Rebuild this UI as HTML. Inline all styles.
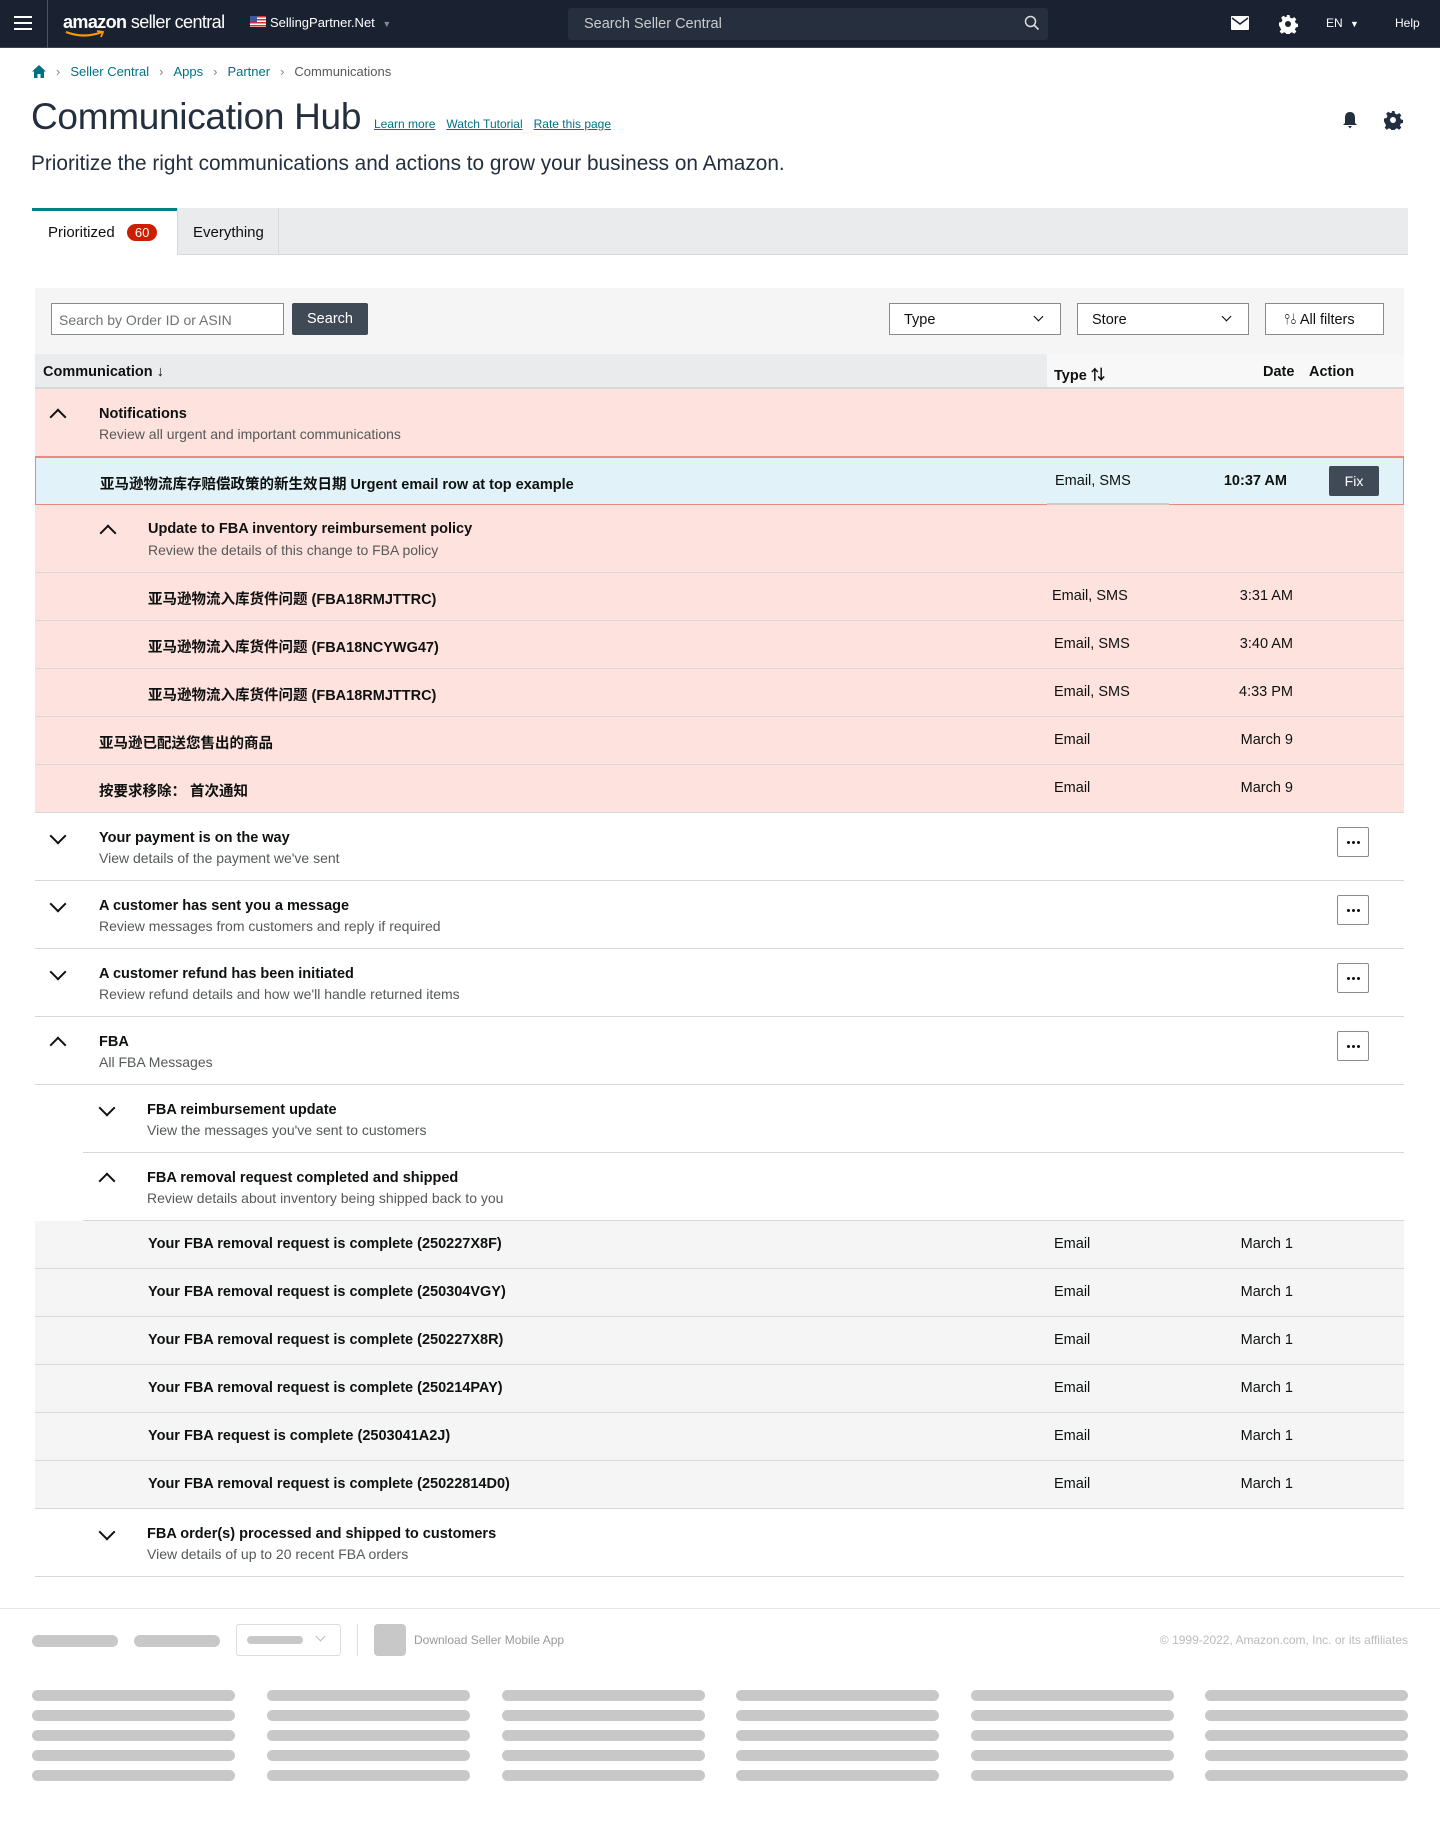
<!DOCTYPE html>
<html><head><meta charset="utf-8"><style>
*{box-sizing:border-box;margin:0;padding:0}
body{width:1440px;height:1830px;background:#fff;font-family:"Liberation Sans","Noto Sans CJK SC",sans-serif;color:#0f1111;font-size:15px;position:relative;overflow:hidden}
.nav{height:48px;background:#1a2130;position:relative;color:#fff;border-bottom:1px solid #3a4553}
.abs{position:absolute}
a{color:#007185;text-decoration:underline}
.bc{top:64px;left:32px;font-size:13px;color:#007185;display:flex;gap:10px;align-items:center}
.bc .g{color:#888}
.row{position:absolute;left:35px;width:1369px;border-bottom:1px solid #d5d9d9}
.pink{background:#fde2dd}
.t{position:absolute;font-weight:700;font-size:14.5px;color:#0f1111}
.s{position:absolute;font-size:14px;color:#565959}
.ty{position:absolute;left:1019px;font-size:14.5px}
.dt{position:absolute;right:111px;font-size:14.5px;text-align:right}
.chev{position:absolute;width:12px;height:12px;border-left:2.5px solid #0f1111;border-top:2.5px solid #0f1111}
.up{transform:rotate(45deg)}
.down{transform:rotate(225deg)}
.dots{position:absolute;left:1302px;width:32px;height:30px;border:1px solid #888c8c;border-radius:2px;background:#fff}
.dots i{position:absolute;top:13px;width:3px;height:3px;border-radius:2px;background:#0f1111}
.sk{position:absolute;height:11px;border-radius:6px;background:#c8c8c8}
</style></head><body>
<div class="nav">
<div class="abs" style="left:14px;top:16px;width:18px;height:14px;border-top:2px solid #fff;border-bottom:2px solid #fff"><div style="margin-top:4px;border-top:2px solid #fff"></div></div>
<div class="abs" style="left:47px;top:0;width:1px;height:48px;background:#555"></div>
<div class="abs" style="left:63px;top:12px;font-size:18px;letter-spacing:-0.6px"><b>amazon</b> seller central</div>
<svg class="abs" style="left:64px;top:30px" width="42" height="8"><path d="M2 2 Q20 9 38 2" stroke="#f90" stroke-width="2.2" fill="none"/><path d="M33 1 L39 2 L37 7" stroke="#f90" stroke-width="1.8" fill="none"/></svg>
<div class="abs" style="left:250px;top:16px;width:16px;height:11px;background:repeating-linear-gradient(#c33 0 1.5px,#fff 1.5px 3px)"><div style="width:7px;height:6px;background:#3c5a9a"></div></div>
<div class="abs" style="left:270px;top:15px;font-size:13px">SellingPartner.Net <span style="color:#888;font-size:9px;margin-left:4px">▼</span></div>
<div class="abs" style="left:568px;top:8px;width:480px;height:32px;background:#252f3e;border-radius:3px;font-size:14.5px;color:#ccc;padding:8px 16px">Search Seller Central</div>
<svg class="abs" style="left:1024px;top:15px" width="16" height="16"><circle cx="6.5" cy="6.5" r="5" stroke="#ddd" stroke-width="1.5" fill="none"/><path d="M10 10 L14.5 14.5" stroke="#ddd" stroke-width="1.6"/></svg>
<svg class="abs" style="left:1231px;top:16px" width="18" height="14"><rect width="18" height="14" rx="1" fill="#fff"/><path d="M1 2 L9 8 L17 2" stroke="#1a2130" stroke-width="1.6" fill="none"/></svg>
<svg class="abs" style="left:1278px;top:14px" width="20" height="20" viewBox="0 0 20 20"><path fill="#fff" d="M8.5 1h3l.5 2.5 2 1 2.2-1.4 2.1 2.1-1.4 2.2 1 2 2.5.5v3l-2.5.5-1 2 1.4 2.2-2.1 2.1-2.2-1.4-2 1-.5 2.5h-3l-.5-2.5-2-1-2.2 1.4-2.1-2.1 1.4-2.2-1-2L1 11.5v-3l2.5-.5 1-2-1.4-2.2 2.1-2.1 2.2 1.4 2-1z"/><circle cx="10" cy="10" r="3" fill="#1a2130"/></svg>
<div class="abs" style="left:1326px;top:16px;font-size:12px">EN <span style="font-size:9px;margin-left:4px">▼</span></div>
<div class="abs" style="left:1395px;top:16px;font-size:12px">Help</div>
</div>
<div class="abs bc"><svg width="14" height="13"><path d="M7 0 L14 6.5 H12 V13 H8.5 V9 H5.5 V13 H2 V6.5 H0Z" fill="#007185"/></svg><span class="g">›</span><span>Seller Central</span><span class="g">›</span><span>Apps</span><span class="g">›</span><span>Partner</span><span class="g">›</span><span style="color:#565959">Communications</span></div>
<div class="abs" style="left:31px;top:96px;font-size:37px;color:#232f3e;letter-spacing:-0.3px">Communication Hub</div>
<div class="abs" style="left:374px;top:117px;font-size:12px;display:flex;gap:11px"><a>Learn more</a><a>Watch Tutorial</a><a>Rate this page</a></div>
<svg class="abs" style="left:1342px;top:111px" width="16" height="18"><path d="M8 1 C4 1 3 4 3 7 V12 L1 14 H15 L13 12 V7 C13 4 12 1 8 1Z M6 15 H10 L8 17.5Z" fill="#232f3e"/></svg>
<svg class="abs" style="left:1383px;top:110px" width="20" height="20" viewBox="0 0 20 20"><path fill="#232f3e" d="M8.5 1h3l.5 2.5 2 1 2.2-1.4 2.1 2.1-1.4 2.2 1 2 2.5.5v3l-2.5.5-1 2 1.4 2.2-2.1 2.1-2.2-1.4-2 1-.5 2.5h-3l-.5-2.5-2-1-2.2 1.4-2.1-2.1 1.4-2.2-1-2L1 11.5v-3l2.5-.5 1-2-1.4-2.2 2.1-2.1 2.2 1.4 2-1z"/><circle cx="10" cy="10" r="3" fill="#fff"/></svg>
<div class="abs" style="left:31px;top:152px;font-size:20.8px;color:#232f3e">Prioritize the right communications and actions to grow your business on Amazon.</div>
<div class="abs" style="left:32px;top:208px;width:1376px;height:47px;background:#eaebec;border-bottom:1px solid #d5d9d9"></div>
<div class="abs" style="left:32px;top:208px;width:145px;height:47px;background:#fff;border-top:3px solid #067d8a;font-size:15px;padding:13px 16px">Prioritized <span style="display:inline-block;background:#cc1f00;color:#fff;border-radius:9px;padding:1px 8px;font-size:13px;margin-left:8px">60</span></div>
<div class="abs" style="left:177px;top:208px;width:102px;height:47px;border-left:1px solid #d5d9d9;border-right:1px solid #d5d9d9;padding:16px 15px;font-size:15px">Everything</div>
<div class="abs" style="left:35px;top:288px;width:1369px;height:66px;background:#f5f5f5"></div>
<div class="abs" style="left:51px;top:303px;width:233px;height:32px;border:1px solid #888c8c;background:#fff;font-size:14px;color:#6f7373;padding:8px 7px">Search by Order ID or ASIN</div>
<div class="abs" style="left:292px;top:303px;width:76px;height:32px;background:#3f4a56;color:#fff;font-size:14.5px;text-align:center;line-height:33px;border-radius:2px">Search</div>
<div class="abs" style="left:889px;top:303px;width:172px;height:32px;border:1px solid #888c8c;background:#fff;padding:8px 14px;font-size:14.5px">Type<span style="position:absolute;right:18px;top:9px;width:7px;height:7px;border-right:1.5px solid #000;border-bottom:1.5px solid #000;transform:rotate(45deg)"></span></div>
<div class="abs" style="left:1077px;top:303px;width:172px;height:32px;border:1px solid #888c8c;background:#fff;padding:8px 14px;font-size:14.5px">Store<span style="position:absolute;right:18px;top:9px;width:7px;height:7px;border-right:1.5px solid #000;border-bottom:1.5px solid #000;transform:rotate(45deg)"></span></div>
<div class="abs" style="left:1265px;top:303px;width:119px;height:32px;border:1px solid #888c8c;background:#fff;padding:8px 18px;font-size:14.5px">⫯⫰ All filters</div>
<div class="abs" style="left:35px;top:354px;width:1369px;height:35px;background:#f8f8f8;border-bottom:2px solid #d5d9d9"></div>
<div class="abs" style="left:35px;top:354px;width:1012px;height:33px;background:#eaebec"></div>
<div class="abs" style="left:43px;top:364px;font-weight:700;font-size:14.5px">Communication ↓</div>
<div class="abs" style="left:1054px;top:364px;font-weight:700;font-size:14.5px">Type ⇅</div>
<div class="abs" style="left:1263px;top:364px;font-weight:700;font-size:14.5px">Date</div>
<div class="abs" style="left:1309px;top:364px;font-weight:700;font-size:14.5px">Action</div>

<div class="row pink" style="top:389px;height:68px;border-bottom:1px solid #e88"><i class="chev up" style="left:17px;top:22px"></i><div class="t" style="left:64px;top:17px">Notifications</div><div class="s" style="left:64px;top:37px">Review all urgent and important communications</div></div>
<div class="row" style="top:457px;height:48px;background:#e1f3f8;border:1px solid #e9897a"><div class="t" style="left:64px;top:15px">亚马逊物流库存赔偿政策的新生效日期 Urgent email row at top example</div><div class="ty" style="top:15px">Email, SMS</div><div class="dt" style="top:15px;font-weight:700;right:116px">10:37 AM</div><div class="abs" style="left:1293px;top:8px;width:50px;height:30px;background:#3f4a56;color:#fff;text-align:center;line-height:30px;font-size:14px;border-radius:2px">Fix</div><div class="abs" style="left:1011px;bottom:-1px;width:122px;height:2px;background:#ccc"></div></div>
<div class="row pink" style="top:505px;height:68px"><i class="chev up" style="left:67px;top:22px"></i><div class="t" style="left:113px;top:16px">Update to FBA inventory reimbursement policy</div><div class="s" style="left:113px;top:37px">Review the details of this change to FBA policy</div></div>
<div class="row pink" style="top:573px;height:48px"><div class="t" style="left:113px;top:15px">亚马逊物流入库货件问题 (FBA18RMJTTRC)</div><div class="ty" style="top:15px;left:1017px">Email, SMS</div><div class="dt" style="top:15px">3:31 AM</div></div>
<div class="row pink" style="top:621px;height:48px"><div class="t" style="left:113px;top:15px">亚马逊物流入库货件问题 (FBA18NCYWG47)</div><div class="ty" style="top:15px">Email, SMS</div><div class="dt" style="top:15px">3:40 AM</div></div>
<div class="row pink" style="top:669px;height:48px"><div class="t" style="left:113px;top:15px">亚马逊物流入库货件问题 (FBA18RMJTTRC)</div><div class="ty" style="top:15px">Email, SMS</div><div class="dt" style="top:15px">4:33 PM</div></div>
<div class="row pink" style="top:717px;height:48px"><div class="t" style="left:64px;top:15px">亚马逊已配送您售出的商品</div><div class="ty" style="top:15px">Email</div><div class="dt" style="top:15px">March 9</div></div>
<div class="row pink" style="top:765px;height:48px"><div class="t" style="left:64px;top:15px">按要求移除： 首次通知</div><div class="ty" style="top:15px">Email</div><div class="dt" style="top:15px">March 9</div></div>

<div class="row" style="top:813px;height:68px"><i class="chev down" style="left:17px;top:17px"></i><div class="t" style="left:64px;top:17px">Your payment is on the way</div><div class="s" style="left:64px;top:37px">View details of the payment we've sent</div><div class="dots" style="top:14px"><i style="left:9px"></i><i style="left:14px"></i><i style="left:19px"></i></div></div>
<div class="row" style="top:881px;height:68px"><i class="chev down" style="left:17px;top:17px"></i><div class="t" style="left:64px;top:17px">A customer has sent you a message</div><div class="s" style="left:64px;top:37px">Review messages from customers and reply if required</div><div class="dots" style="top:14px"><i style="left:9px"></i><i style="left:14px"></i><i style="left:19px"></i></div></div>
<div class="row" style="top:949px;height:68px"><i class="chev down" style="left:17px;top:17px"></i><div class="t" style="left:64px;top:17px">A customer refund has been initiated</div><div class="s" style="left:64px;top:37px">Review refund details and how we'll handle returned items</div><div class="dots" style="top:14px"><i style="left:9px"></i><i style="left:14px"></i><i style="left:19px"></i></div></div>
<div class="row" style="top:1017px;height:68px"><i class="chev up" style="left:17px;top:22px"></i><div class="t" style="left:64px;top:17px">FBA</div><div class="s" style="left:64px;top:37px">All FBA Messages</div><div class="dots" style="top:14px"><i style="left:9px"></i><i style="left:14px"></i><i style="left:19px"></i></div></div>
<div class="row" style="top:1085px;height:68px;left:83px;width:1321px"><i class="chev down" style="left:18px;top:17px"></i><div class="t" style="left:64px;top:17px">FBA reimbursement update</div><div class="s" style="left:64px;top:37px">View the messages you've sent to customers</div></div>
<div class="row" style="top:1153px;height:68px;left:83px;width:1321px"><i class="chev up" style="left:18px;top:22px"></i><div class="t" style="left:64px;top:17px">FBA removal request completed and shipped</div><div class="s" style="left:64px;top:37px">Review details about inventory being shipped back to you</div></div>
<div class="row" style="top:1221px;height:48px;background:#f5f5f5"><div class="t" style="left:113px;top:15px">Your FBA removal request is complete (250227X8F)</div><div class="ty" style="top:15px">Email</div><div class="dt" style="top:15px">March 1</div></div>
<div class="row" style="top:1269px;height:48px;background:#f5f5f5"><div class="t" style="left:113px;top:15px">Your FBA removal request is complete (250304VGY)</div><div class="ty" style="top:15px">Email</div><div class="dt" style="top:15px">March 1</div></div>
<div class="row" style="top:1317px;height:48px;background:#f5f5f5"><div class="t" style="left:113px;top:15px">Your FBA removal request is complete (250227X8R)</div><div class="ty" style="top:15px">Email</div><div class="dt" style="top:15px">March 1</div></div>
<div class="row" style="top:1365px;height:48px;background:#f5f5f5"><div class="t" style="left:113px;top:15px">Your FBA removal request is complete (250214PAY)</div><div class="ty" style="top:15px">Email</div><div class="dt" style="top:15px">March 1</div></div>
<div class="row" style="top:1413px;height:48px;background:#f5f5f5"><div class="t" style="left:113px;top:15px">Your FBA request is complete (2503041A2J)</div><div class="ty" style="top:15px">Email</div><div class="dt" style="top:15px">March 1</div></div>
<div class="row" style="top:1461px;height:48px;background:#f5f5f5"><div class="t" style="left:113px;top:15px">Your FBA removal request is complete (25022814D0)</div><div class="ty" style="top:15px">Email</div><div class="dt" style="top:15px">March 1</div></div>
<div class="row" style="top:1509px;height:68px;left:83px;width:1321px"><i class="chev down" style="left:18px;top:17px"></i><div class="t" style="left:64px;top:17px">FBA order(s) processed and shipped to customers</div><div class="s" style="left:64px;top:37px">View details of up to 20 recent FBA orders</div></div>
<div class="abs" style="left:35px;top:1576px;width:48px;height:1px;background:#d5d9d9"></div>

<div class="abs" style="left:0;top:1608px;width:1440px;height:1px;background:#e7e7e7"></div>
<div class="sk" style="left:32px;top:1635px;width:86px;height:12px"></div>
<div class="sk" style="left:134px;top:1635px;width:86px;height:12px"></div>
<div class="abs" style="left:236px;top:1624px;width:105px;height:32px;border:1px solid #ddd;border-radius:3px"><div class="sk" style="left:10px;top:11px;width:56px;height:8px"></div><span style="position:absolute;left:80px;top:8px;width:7px;height:7px;border-right:1.5px solid #bbb;border-bottom:1.5px solid #bbb;transform:rotate(45deg)"></span></div>
<div class="abs" style="left:357px;top:1624px;width:1px;height:32px;background:#ddd"></div>
<div class="abs" style="left:374px;top:1624px;width:32px;height:32px;background:#c8c8c8;border-radius:4px"></div>
<div class="abs" style="left:414px;top:1633px;font-size:12px;color:#999">Download Seller Mobile App</div>
<div class="abs" style="right:32px;top:1633px;font-size:12px;color:#bbb">© 1999-2022, Amazon.com, Inc. or its affiliates</div>
<div id="skg"></div>
<script>
var h='';[32,267,502,736,971,1205].forEach(function(x){[1690,1710,1730,1750,1770].forEach(function(y){h+='<div class="sk" style="left:'+x+'px;top:'+y+'px;width:203px"></div>';});});
document.getElementById('skg').innerHTML=h;
</script>
</body></html>
